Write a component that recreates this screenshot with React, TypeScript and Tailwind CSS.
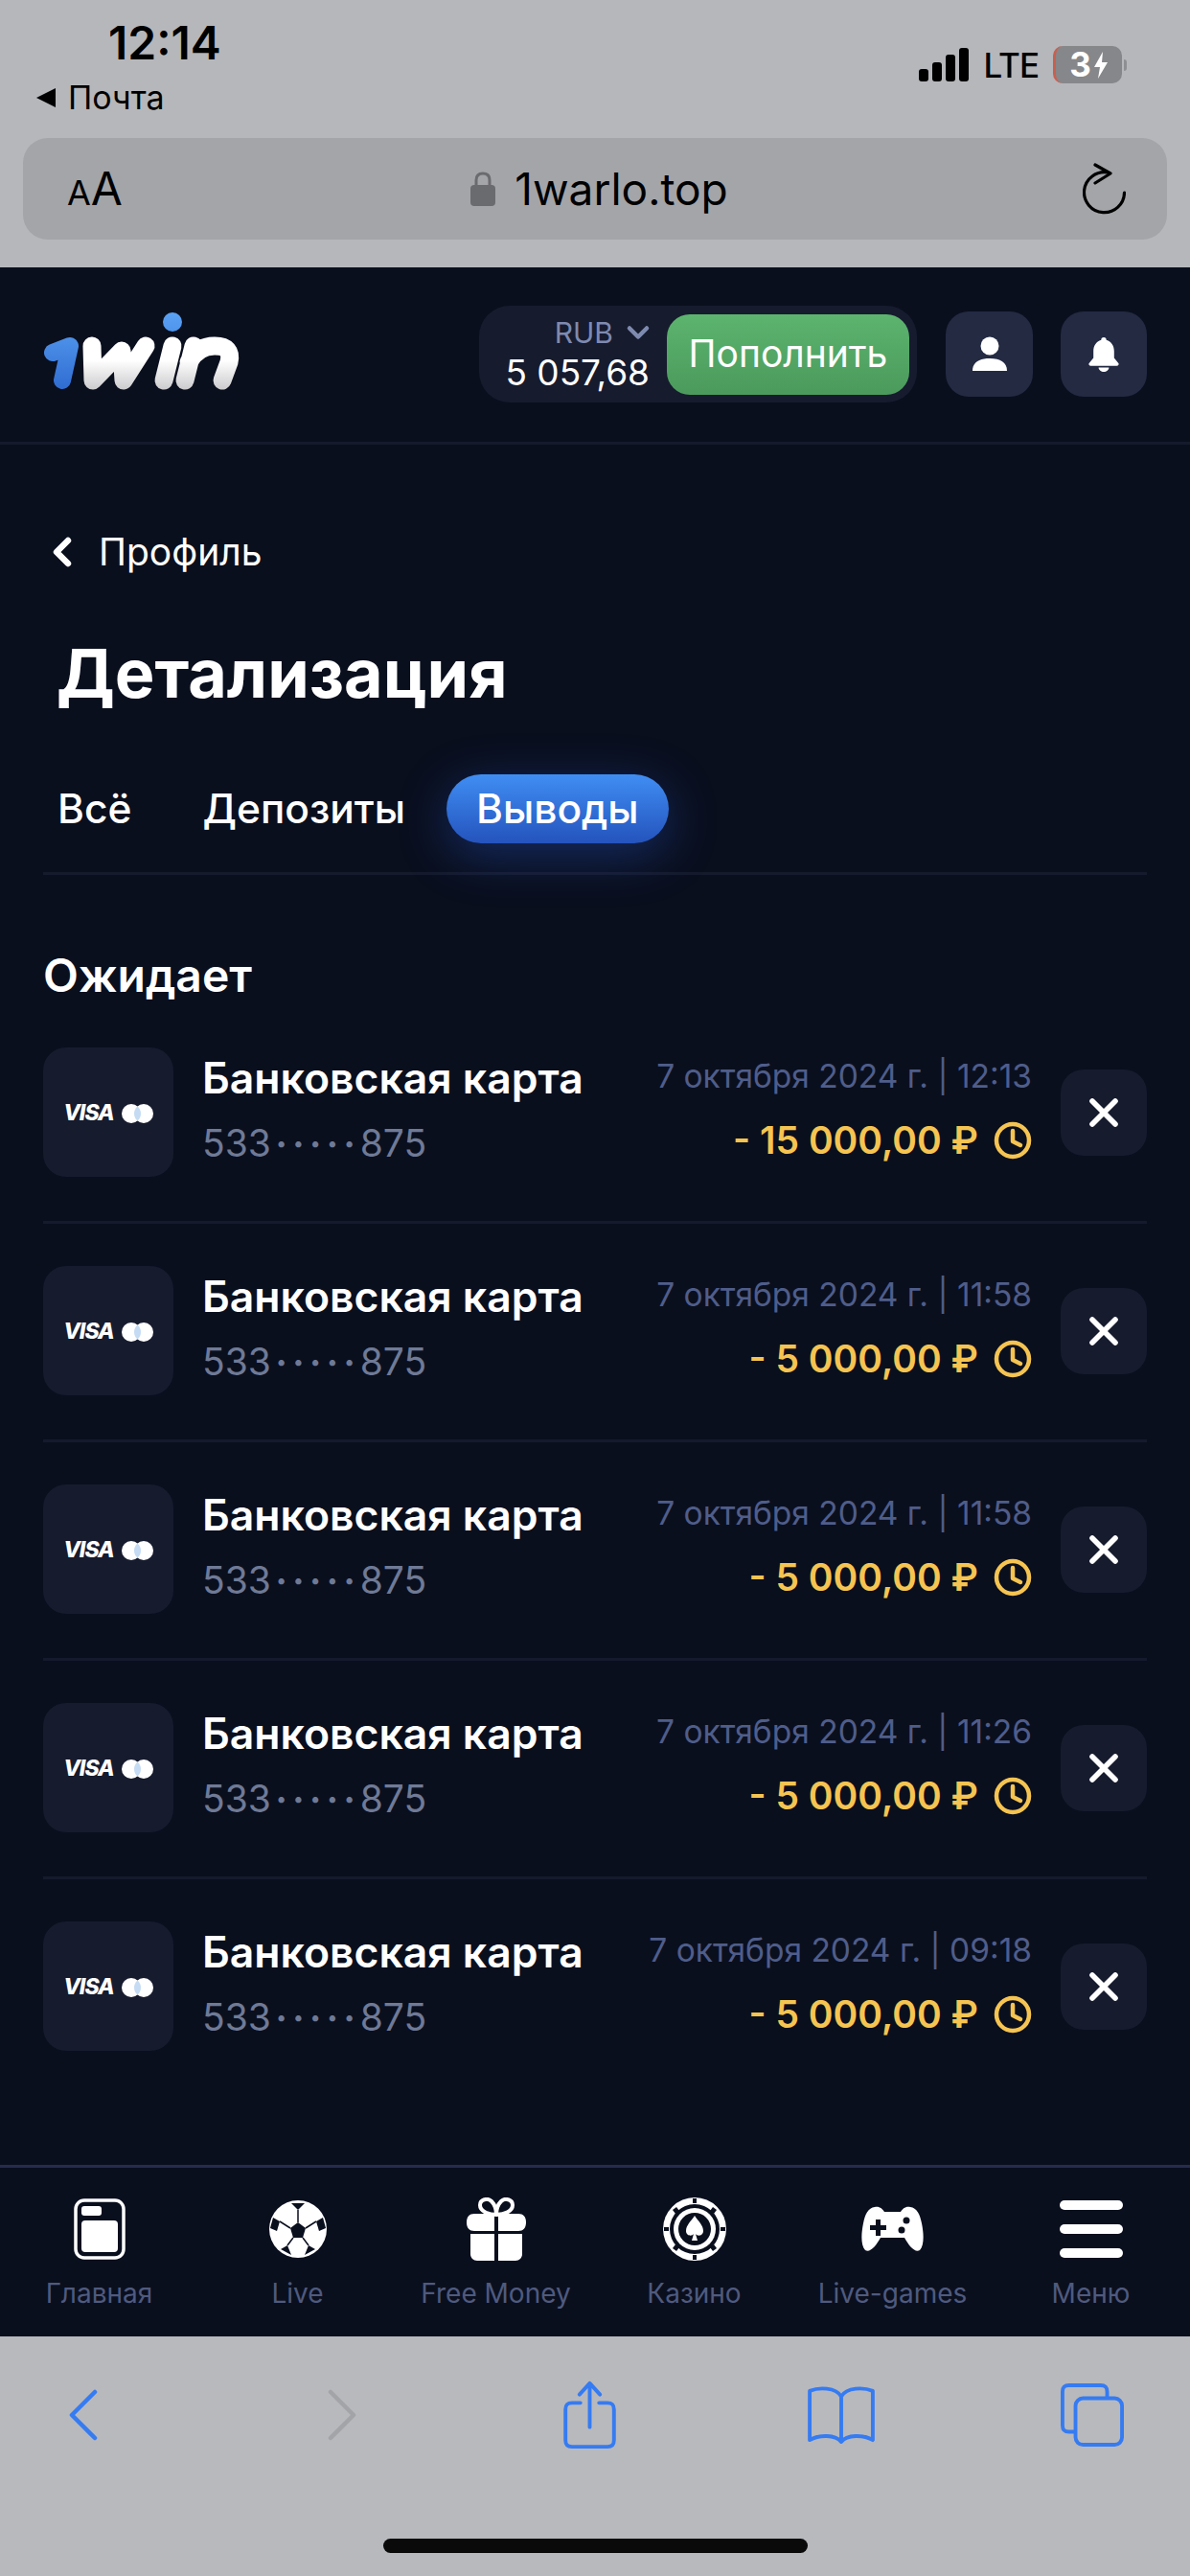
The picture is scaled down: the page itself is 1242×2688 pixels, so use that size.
import React from 'react';
import { ChevronLeft, ChevronDown, X } from 'lucide-react';

const WITHDRAWALS = [
  { id: 1, date: '7 октября 2024 г. | 12:13', amount: '- 15 000,00 ₽' },
  { id: 2, date: '7 октября 2024 г. | 11:58', amount: '- 5 000,00 ₽' },
  { id: 3, date: '7 октября 2024 г. | 11:58', amount: '- 5 000,00 ₽' },
  { id: 4, date: '7 октября 2024 г. | 11:26', amount: '- 5 000,00 ₽' },
  { id: 5, date: '7 октября 2024 г. | 09:18', amount: '- 5 000,00 ₽' },
];

const Logo = () => (
  <svg width="207" height="85" viewBox="15 15 207 85" fill="none">
    <defs>
      <linearGradient id="logoBlue" gradientUnits="userSpaceOnUse" x1="0" y1="16" x2="0" y2="98">
        <stop offset="0" stopColor="#5aa2f5" />
        <stop offset="1" stopColor="#2f6bd0" />
      </linearGradient>
      <linearGradient id="logoWhite" gradientUnits="userSpaceOnUse" x1="0" y1="40" x2="0" y2="98">
        <stop offset="0.45" stopColor="#ffffff" />
        <stop offset="1" stopColor="#c9c9cc" />
      </linearGradient>
    </defs>
    <path d="M 25 58 L 43 51 L 35 87" stroke="url(#logoBlue)" strokeWidth="18" strokeLinecap="round" strokeLinejoin="round" />
    <circle cx="150" cy="26" r="10" fill="url(#logoBlue)" />
    <g stroke="url(#logoWhite)" strokeWidth="19" strokeLinecap="round" strokeLinejoin="round">
      <path d="M 66 51 L 67 87 L 97 56 L 99 87 L 122 51" />
      <path d="M 150 51 L 141 87" />
      <path d="M 172 51 L 163 87 M 167 68 Q 176 51 194 51 Q 213 51 209 68 L 202 87" />
    </g>
  </svg>
);

const VisaMark = () => (
  <div className="mt-[2px] flex items-center gap-[8px]">
    <span className="font-['Inter'] text-[23px] leading-none font-extrabold italic tracking-[-1px] text-white">VISA</span>
    <svg width="33" height="20" viewBox="0 0 33 20">
      <circle cx="10" cy="10" r="10" fill="#ffffff" />
      <circle cx="23" cy="10" r="10" fill="#ffffff" />
      <path d="M 16.5 2.4 A 10 10 0 0 1 16.5 17.6 A 10 10 0 0 1 16.5 2.4 Z" fill="#c5dbf3" />
    </svg>
  </div>
);

const ClockIcon = () => (
  <svg width="40" height="40" viewBox="0 0 40 40" fill="none" stroke="#f5c451" strokeWidth="4.5" strokeLinecap="round" strokeLinejoin="round">
    <circle cx="20" cy="20" r="17" />
    <path d="M 20 10 L 20 21 L 28 25" />
  </svg>
);

const HomeIcon = () => (
  <svg width="54" height="64" viewBox="0 0 54 64" fill="none">
    <rect x="2" y="2" width="50" height="60" rx="9" stroke="#fff" strokeWidth="3.5" />
    <rect x="8" y="8" width="21" height="10" rx="3" fill="#fff" />
    <rect x="8" y="23" width="38" height="33" rx="4" fill="#fff" />
  </svg>
);

const BallIcon = () => (
  <svg width="60" height="60" viewBox="0 0 60 60">
    <circle cx="30" cy="30" r="30" fill="#fff" />
    <g fill="#0a0f1e">
      <path d="M 23 3 L 37 3 L 30 10 Z" />
      <path d="M 30 23 L 38 29 L 35 39 L 25 39 L 22 29 Z" />
      <path d="M 4 18 L 11 22 L 8 32 L 1 29 Z" />
      <path d="M 56 18 L 49 22 L 52 32 L 59 29 Z" />
      <path d="M 12 51 L 19 47 L 23 57 Z" />
      <path d="M 48 51 L 41 47 L 37 57 Z" />
    </g>
    <g stroke="#0a0f1e" strokeWidth="1.5">
      <path d="M 30 10 L 30 23 M 22 29 L 11 22 M 38 29 L 49 22 M 25 39 L 19 47 M 35 39 L 41 47" />
    </g>
  </svg>
);

const GiftIcon = () => (
  <svg width="62" height="66" viewBox="0 0 62 66" fill="none">
    <path d="M 31 18 C 22 18 14 14 14 8 C 14 2 22 0 26 4 C 29 7 31 13 31 18 C 31 13 33 7 36 4 C 40 0 48 2 48 8 C 48 14 40 18 31 18 Z" stroke="#fff" strokeWidth="4" />
    <path d="M 8 17 H 29 V 35 H 8 C 3 35 0 32 0 26 C 0 20 3 17 8 17 Z" fill="#fff" />
    <path d="M 54 17 H 33 V 35 H 54 C 59 35 62 32 62 26 C 62 20 59 17 54 17 Z" fill="#fff" />
    <path d="M 4 38 H 29 V 66 H 11 C 7 66 4 63 4 59 Z" fill="#fff" />
    <path d="M 58 38 H 33 V 66 H 51 C 55 66 58 63 58 59 Z" fill="#fff" />
  </svg>
);

const ChipIcon = () => (
  <svg width="66" height="66" viewBox="0 0 66 66">
    <circle cx="33" cy="33" r="33" fill="#fff" />
    <circle cx="33" cy="33" r="26" fill="#0a0f1e" />
    <circle cx="33" cy="33" r="22" fill="#fff" />
    <circle cx="33" cy="33" r="17" fill="#0a0f1e" />
    <path d="M 33 19 C 37 25 42 29 42 35 C 42 40 36 41 34 38 L 36 45 H 30 L 32 38 C 30 41 24 40 24 35 C 24 29 29 25 33 19 Z" fill="#fff" />
    <g fill="#0a0f1e">
      <rect x="31" y="1" width="4" height="5" />
      <rect x="31" y="60" width="4" height="5" />
      <rect x="1" y="31" width="5" height="4" />
      <rect x="60" y="31" width="5" height="4" />
      <path d="M 14 10 L 17 14 L 13 17 L 10 13 Z" />
      <path d="M 52 10 L 56 13 L 53 17 L 49 14 Z" />
      <path d="M 14 56 L 10 53 L 13 49 L 17 52 Z" />
      <path d="M 52 56 L 49 52 L 53 49 L 56 53 Z" />
    </g>
  </svg>
);

const GamepadIcon = () => (
  <svg width="65" height="48" viewBox="0 0 65 48">
    <path d="M 14 1 C 19 0 22 3 24 6 H 41 C 43 3 46 0 51 1 C 58 2 61 8 63 18 C 65 28 66 40 61 46 C 56 49 50 42 45 33 H 20 C 15 42 9 49 4 46 C -1 40 0 28 2 18 C 4 8 7 2 14 1 Z" fill="#fff" />
    <path d="M 15 14 H 20 V 20 H 26 V 25 H 20 V 31 H 15 V 25 H 9 V 20 H 15 Z" fill="#0a0f1e" />
    <circle cx="47" cy="15" r="3.5" fill="#0a0f1e" />
    <circle cx="42" cy="25" r="3.5" fill="#0a0f1e" />
  </svg>
);

const MenuIcon = () => (
  <div className="flex h-[60px] w-[66px] flex-col justify-between">
    <div className="h-[10px] rounded-full bg-white" />
    <div className="h-[10px] rounded-full bg-white" />
    <div className="h-[10px] rounded-full bg-white" />
  </div>
);

const NAV_ITEMS = [
  { label: 'Главная', icon: <HomeIcon /> },
  { label: 'Live', icon: <BallIcon /> },
  { label: 'Free Money', icon: <GiftIcon /> },
  { label: 'Казино', icon: <ChipIcon /> },
  { label: 'Live-games', icon: <GamepadIcon /> },
  { label: 'Меню', icon: <MenuIcon /> },
];

const StatusBar = () => (
  <div className="flex h-[144px] items-start justify-between pl-[38px] pr-[66px]">
    <div className="flex flex-col">
      <span className="mt-[22px] ml-[75px] text-[48px] leading-[46px] font-semibold text-black">12:14</span>
      <div className="mt-[15px] flex items-center gap-[13px]">
        <span className="h-0 w-0 border-y-[10px] border-r-[20px] border-y-transparent border-r-black" />
        <span className="text-[34px] leading-[38px] text-black">Почта</span>
      </div>
    </div>
    <div className="mt-[48px] flex items-center">
      <div className="flex items-end gap-[4px]">
        <div className="h-[13px] w-[10px] rounded-[3px] bg-black" />
        <div className="h-[20px] w-[10px] rounded-[3px] bg-black" />
        <div className="h-[28px] w-[10px] rounded-[3px] bg-black" />
        <div className="h-[35px] w-[10px] rounded-[3px] bg-black" />
      </div>
      <span className="ml-[16px] text-[35px] leading-[38px] font-medium tracking-[-1px] text-black">LTE</span>
      <div className="ml-[15px] flex h-[39px] w-[72px] items-center justify-center gap-[2px] rounded-[10px] border-l-[3px] border-l-[#c8604f] bg-[#86878a]">
        <span className="text-[35px] leading-none font-bold text-white">3</span>
        <svg width="16" height="30" viewBox="0 0 16 28"><path d="M 10 0 L 1 16 H 7 L 5 28 L 15 11 H 9 Z" fill="#fff" /></svg>
      </div>
      <div className="ml-[2px] h-[12px] w-[3px] rounded-r-full bg-[#8e8f92]" />
    </div>
  </div>
);

const UrlBar = () => (
  <div className="mx-[24px] flex h-[106px] items-center rounded-[26px] bg-[#a4a5a9] pl-[46px] pr-[43px]">
    <div className="flex items-baseline">
      <span className="text-[36px] leading-none text-black">A</span>
      <span className="text-[48px] leading-none text-black">A</span>
    </div>
    <div className="flex flex-1 items-center justify-center gap-[20px] pr-[7px]">
      <svg width="26" height="36" viewBox="0 0 26 36" fill="none">
        <path d="M 6 16 V 9 C 6 4 9 2 13 2 C 17 2 20 4 20 9 V 16" stroke="#6a6b6f" strokeWidth="3" />
        <rect x="0" y="14" width="26" height="22" rx="4" fill="#6a6b6f" />
      </svg>
      <span className="text-[46px] leading-none text-black">1warlo.top</span>
    </div>
    <svg width="45" height="54" viewBox="0 0 45 54" fill="none" stroke="#000" strokeWidth="3.2" strokeLinecap="round" strokeLinejoin="round">
      <path d="M 26 10 A 21 21 0 1 0 43.5 31" />
      <path d="M 13 2 L 29 11 L 13 21" />
    </svg>
  </div>
);

const WithdrawalRow = ({ date, amount, last }: { date: string; amount: string; last: boolean }) => (
  <div className={last ? '' : 'mb-[44px] border-b-[3px] border-[#151a2c] pb-[46px]'}>
    <div className="flex h-[135px] items-start">
      <div className="flex h-[135px] w-[136px] shrink-0 items-center justify-center rounded-[24px] bg-[#161b2e]">
        <VisaMark />
      </div>
      <div className="ml-[30px] flex flex-col pt-[6px]">
        <span className="text-[44.5px] leading-[52px] font-semibold text-white">Банковская карта</span>
        <span className="mt-[16px] flex items-center text-[39px] leading-[52px] text-[#6f7a96]">
          533
          <span className="ml-[5px] mr-[-1px] text-[20px] tracking-[6.5px]">•••••</span>
          875
        </span>
      </div>
      <div className="ml-auto flex flex-col items-end pt-[6px]">
        <span className="text-[33.5px] leading-[48px] text-[#4f5d8a]">{date}</span>
        <div className="mt-[17px] flex h-[52px] items-center gap-[16px]">
          <span className="text-[39px] leading-[52px] font-semibold text-[#f5c451]">{amount}</span>
          <ClockIcon />
        </div>
      </div>
      <div className="ml-[30px] mt-[23px] flex h-[90px] w-[90px] shrink-0 items-center justify-center rounded-[24px] bg-[#161b2e]">
        <X className="h-[48px] w-[48px] text-white" strokeWidth={2.8} />
      </div>
    </div>
  </div>
);

const App: React.FC = () => {
  return (
    <div className="flex h-[2688px] w-[1242px] flex-col overflow-hidden bg-[#0a0f1e] font-['Inter',sans-serif]">

      {/* Safari top */}
      <div className="h-[279px] shrink-0 bg-[#b6b7bb]">
        <StatusBar />
        <UrlBar />
      </div>

      {/* Site header */}
      <div className="flex h-[185px] shrink-0 items-start border-b-[3px] border-[#151a2c] pl-[45px] pr-[45px]">
        <div className="mt-[46px]">
          <Logo />
        </div>
        <div className="ml-auto mt-[40px] flex h-[101px] w-[457px] items-center rounded-[32px] bg-[#161b2e] pr-[8px]">
          <div className="flex w-[178px] flex-col items-end">
            <div className="flex items-center gap-[14px] text-[#7f8ab0]">
              <span className="text-[30px] leading-[38px]">RUB</span>
              <ChevronDown className="mx-[-6px] h-[36px] w-[36px]" strokeWidth={3} />
            </div>
            <span className="text-[37px] leading-[46px] text-white">5 057,68</span>
          </div>
          <button className="ml-auto flex h-[84px] w-[253px] items-center justify-center rounded-[24px] bg-gradient-to-b from-[#5cb46e] to-[#4b9a5c] text-[39px] text-white">
            Пополнить
          </button>
        </div>
        <button className="ml-[30px] mt-[46px] flex h-[89px] w-[91px] items-center justify-center rounded-[24px] bg-[#232a42]">
          <svg width="38" height="38" viewBox="0 0 38 38" fill="#fff">
            <circle cx="19" cy="10" r="9.5" />
            <path d="M 1 36 C 1 27 8 23 19 23 C 30 23 37 27 37 36 Z" />
          </svg>
        </button>
        <button className="ml-[29px] mt-[46px] flex h-[89px] w-[90px] items-center justify-center rounded-[24px] bg-[#232a42]">
          <svg width="34" height="36" viewBox="0 0 36 40" fill="#fff">
            <path d="M 18 0 C 20 0 21 1 21 3 C 27 5 30 10 30 16 V 24 L 35 30 C 36 31 35 33 33 33 H 3 C 1 33 0 31 1 30 L 6 24 V 16 C 6 10 9 5 15 3 C 15 1 16 0 18 0 Z" />
            <path d="M 12 35 H 24 C 24 38 21 40 18 40 C 15 40 12 38 12 35 Z" />
          </svg>
        </button>
      </div>

      {/* Page content */}
      <div className="flex-1 px-[45px] pt-[92px]">
        <div className="flex h-[40px] items-center text-white">
          <ChevronLeft className="ml-[-4px] h-[48px] w-[48px]" strokeWidth={3.2} />
          <span className="ml-[14px] text-[39px] leading-[40px]">Профиль</span>
        </div>
        <h1 className="mt-[67px] ml-[14px] text-[70px] leading-[80px] font-bold text-white">Детализация</h1>

        <div className="border-b-[3px] border-[#151a2c] pb-[30px]">
          <div className="mt-[65px] ml-[-16px] flex h-[72px] items-center gap-[12px] text-[42.5px] font-medium text-white">
            <button className="px-[31px]">Всё</button>
            <button className="px-[31px]">Депозиты</button>
            <button className="h-[72px] rounded-[36px] bg-gradient-to-b from-[#408ef3] to-[#2553bd] px-[31px] shadow-[0_12px_50px_rgba(40,90,210,0.38)]">Выводы</button>
          </div>
        </div>

        <h2 className="mt-[77px] text-[48px] leading-[56px] font-semibold text-white">Ожидает</h2>

        <div className="mt-[47px]">
          {WITHDRAWALS.map((item, index) => (
            <WithdrawalRow key={item.id} date={item.date} amount={item.amount} last={index === WITHDRAWALS.length - 1} />
          ))}
        </div>
      </div>

      {/* Bottom nav */}
      <div className="grid h-[179px] shrink-0 grid-cols-6 border-t-[3px] border-[#262c4a] bg-[#0a0f1e]">
        {NAV_ITEMS.map((item) => (
          <div key={item.label} className="flex flex-col items-center pt-[31px]">
            <div className="flex h-[66px] items-center justify-center">{item.icon}</div>
            <span className="mt-[17px] text-[28px] leading-[34px] text-[#4f5a7e]">{item.label}</span>
          </div>
        ))}
      </div>

      {/* Safari bottom */}
      <div className="flex h-[250px] shrink-0 flex-col bg-[#b8b9bd]">
        <div className="flex h-[211px] items-start pl-[72px] pt-[46px]">
          <div className="flex h-[72px] items-center">
            <svg width="30" height="54" viewBox="0 0 30 54" fill="none" stroke="#357bf2" strokeWidth="4.5" strokeLinecap="round" strokeLinejoin="round"><path d="M 27 3 L 3 27 L 27 51" /></svg>
            <svg className="ml-[240px]" width="30" height="54" viewBox="0 0 30 54" fill="none" stroke="#a3a4a8" strokeWidth="4.5" strokeLinecap="round" strokeLinejoin="round"><path d="M 3 3 L 27 27 L 3 51" /></svg>
            <svg className="ml-[216px]" width="55" height="72" viewBox="0 0 56 74" fill="none" stroke="#357bf2" strokeWidth="4" strokeLinecap="round" strokeLinejoin="round">
              <path d="M 28 3 V 50 M 17 15 L 28 3 L 39 15" />
              <path d="M 18 24 H 9 C 4 24 2 26 2 31 V 64 C 2 69 4 71 9 71 H 47 C 52 71 54 69 54 64 V 31 C 54 26 52 24 47 24 H 38" />
            </svg>
            <svg className="ml-[200px]" width="70" height="60" viewBox="0 0 72 62" fill="none" stroke="#357bf2" strokeWidth="4" strokeLinejoin="round">
              <path d="M 36 11 C 30 1 12 1 2 5 V 58 C 12 52 30 52 36 60 C 42 52 60 52 70 58 V 5 C 60 1 42 1 36 11 Z M 36 11 V 60" />
            </svg>
            <svg className="ml-[194px]" width="66" height="66" viewBox="0 0 68 68" fill="none" stroke="#357bf2" strokeWidth="4">
              <path d="M 16 52 H 9 C 4 52 2 50 2 45 V 9 C 2 4 4 2 9 2 H 43 C 48 2 50 4 50 9 V 16" />
              <rect x="16" y="16" width="50" height="50" rx="8" />
            </svg>
          </div>
        </div>
        <div className="mx-auto h-[15px] w-[443px] rounded-full bg-[#0a0a0a]" />
      </div>
    </div>
  );
};

export default App;
